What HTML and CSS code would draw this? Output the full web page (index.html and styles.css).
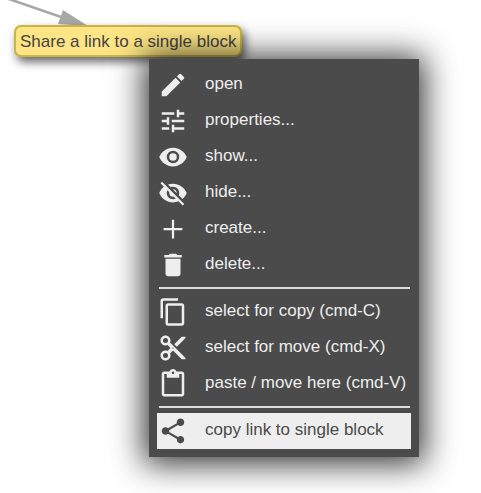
FILE: index.html
```
<!DOCTYPE html>
<html lang="en">
<head>
  <meta charset="UTF-8">
  <title>Concept map</title>
  <link rel="stylesheet" href="styles.css">
</head>
<body>
  <main class="map">
    <!-- incoming link -->
    <svg class="edge" width="100" height="30" viewBox="0 0 100 30" aria-hidden="true">
      <path d="M6 -2 L64 18" stroke="#a8a8a8" stroke-width="2.6" fill="none"/>
      <path d="M63 10 L88 26 L58 24 Z" fill="#a8a8a8"/>
    </svg>

    <div class="node">Share a link to a single block</div>

    <div class="menu" role="menu">
      <button class="item" role="menuitem">
        <svg class="icon" viewBox="0 0 24 24"><path d="M3 17.25V21h3.75L17.81 9.94l-3.75-3.75L3 17.25zM20.71 7.04a1 1 0 0 0 0-1.41l-2.34-2.34a1 1 0 0 0-1.41 0l-1.83 1.83 3.75 3.75 1.83-1.83z"/></svg>
        <span>open</span>
      </button>
      <button class="item" role="menuitem">
        <svg class="icon" viewBox="0 0 24 24"><path d="M3 17v2h6v-2H3zM3 5v2h10V5H3zm10 16v-2h8v-2h-8v-2h-2v6h2zM7 9v2H3v2h4v2h2V9H7zm14 4v-2H11v2h10zm-6-4h2V7h4V5h-4V3h-2v6z"/></svg>
        <span>properties...</span>
      </button>
      <button class="item" role="menuitem">
        <svg class="icon" viewBox="0 0 24 24"><path d="M12 4.5C7 4.5 2.73 7.61 1 12c1.73 4.39 6 7.5 11 7.5s9.27-3.11 11-7.5c-1.73-4.39-6-7.5-11-7.5zM12 17a5 5 0 1 1 0-10 5 5 0 0 1 0 10zm0-8a3 3 0 1 0 0 6 3 3 0 0 0 0-6z"/></svg>
        <span>show...</span>
      </button>
      <button class="item" role="menuitem">
        <svg class="icon" viewBox="0 0 24 24"><path d="M12 7c2.76 0 5 2.24 5 5 0 .65-.13 1.26-.36 1.83l2.92 2.92c1.51-1.26 2.7-2.89 3.43-4.75-1.73-4.39-6-7.5-11-7.5-1.4 0-2.74.25-3.98.7l2.16 2.16C10.74 7.13 11.35 7 12 7zM2 4.27l2.28 2.28.46.46C3.08 8.3 1.78 10.02 1 12c1.73 4.39 6 7.5 11 7.5 1.55 0 3.03-.3 4.38-.84l.42.42L19.73 22 21 20.73 3.27 3 2 4.27zM7.53 9.8l1.55 1.55c-.05.21-.08.43-.08.65 0 1.66 1.34 3 3 3 .22 0 .44-.03.65-.08l1.55 1.55c-.67.33-1.41.53-2.2.53-2.76 0-5-2.24-5-5 0-.79.2-1.53.53-2.2zm4.31-.78l3.15 3.15.02-.16c0-1.66-1.34-3-3-3l-.17.01z"/></svg>
        <span>hide...</span>
      </button>
      <button class="item" role="menuitem">
        <svg class="icon" viewBox="0 0 24 24"><path d="M19.5 12.9h-6.6v6.6h-1.8v-6.6H4.5v-1.8h6.6V4.5h1.8v6.6h6.6v1.8z"/></svg>
        <span>create...</span>
      </button>
      <button class="item" role="menuitem">
        <svg class="icon" viewBox="0 0 24 24"><path d="M6 19c0 1.1.9 2 2 2h8c1.1 0 2-.9 2-2V7H6v12zM19 4h-3.500l-1-1h-5l-1 1H5v2h14V4z"/></svg>
        <span>delete...</span>
      </button>
      <hr class="line">
      <button class="item" role="menuitem">
        <svg class="icon" viewBox="0 0 24 24"><path d="M16 1H4c-1.1 0-2 .9-2 2v14h2V3h12V1zm3 4H8c-1.1 0-2 .9-2 2v14c0 1.1.9 2 2 2h11c1.1 0 2-.9 2-2V7c0-1.1-.9-2-2-2zm0 16H8V7h11v14z"/></svg>
        <span>select for copy (cmd-C)</span>
      </button>
      <button class="item" role="menuitem">
        <svg class="icon" viewBox="0 0 24 24"><path d="M9.64 7.64c.23-.5.36-1.05.36-1.64 0-2.21-1.79-4-4-4S2 3.79 2 6s1.79 4 4 4c.59 0 1.14-.13 1.64-.36L10 12l-2.36 2.36C7.14 14.13 6.59 14 6 14c-2.21 0-4 1.79-4 4s1.79 4 4 4 4-1.79 4-4c0-.59-.13-1.14-.36-1.64L12 14l7 7h3v-1L9.64 7.64zM6 8a2 2 0 1 1 0-4 2 2 0 0 1 0 4zm0 12a2 2 0 1 1 0-4 2 2 0 0 1 0 4zm6-7.5a.5.5 0 1 1 0-1 .5.5 0 0 1 0 1zM19 3l-6 6 2 2 7-7V3z"/></svg>
        <span>select for move (cmd-X)</span>
      </button>
      <button class="item" role="menuitem">
        <svg class="icon" viewBox="0 0 24 24"><path d="M19 2h-4.18C14.4.84 13.3 0 12 0S9.6.84 9.18 2H5c-1.1 0-2 .9-2 2v16c0 1.1.9 2 2 2h14c1.1 0 2-.9 2-2V4c0-1.1-.9-2-2-2zm-7 0a1 1 0 1 1 0 2 1 1 0 0 1 0-2zm7 18H5V4h2v3h10V4h2v16z"/></svg>
        <span>paste / move here (cmd-V)</span>
      </button>
      <hr class="line">
      <button class="item active" role="menuitem">
        <svg class="icon" viewBox="0 0 24 24"><path d="M18 16.08c-.76 0-1.44.3-1.96.77L8.91 12.7c.05-.23.09-.46.09-.7s-.04-.47-.09-.7l7.05-4.11c.54.5 1.25.81 2.04.81 1.66 0 3-1.34 3-3s-1.34-3-3-3-3 1.34-3 3c0 .24.04.47.09.7L8.04 9.81C7.5 9.31 6.79 9 6 9c-1.66 0-3 1.34-3 3s1.34 3 3 3c.79 0 1.5-.31 2.04-.81l7.12 4.16c-.05.21-.08.43-.08.65 0 1.61 1.31 2.92 2.92 2.92s2.92-1.31 2.92-2.92-1.31-2.92-2.92-2.92z"/></svg>
        <span>copy link to single block</span>
      </button>
    </div>
  </main>
</body>
</html>
```
FILE: styles.css
```
body {
  margin: 0;
  background: #fff;
  font-family: "Liberation Sans", Arial, sans-serif;
  font-size: 17px;
}

.map {
  position: relative;
  min-height: 100vh;
  overflow: hidden;
}

.edge {
  position: absolute;
  top: 0;
  left: 0;
}

/* nodes and the menu sit freely on the map */
.node {
  position: absolute;
  top: 25px;
  left: 14px;
  padding: 5px 4px 3px;
  border: 2px solid #cab443;
  border-radius: 7px;
  background: #fde585;
  color: #444;
  line-height: 20px;
  white-space: nowrap;
  box-shadow: 3px 5px 10px rgba(0, 0, 0, 0.6);
}

.menu {
  position: absolute;
  top: 59px;
  left: 149px;
  padding: 8px;
  background: #4b4b4b;
  box-shadow: 0 2px 30px 5px rgba(0, 0, 0, 0.8);
}

.item {
  display: flex;
  align-items: center;
  gap: 17px;
  width: 100%;
  height: 36px;
  padding: 0 5px 0 1px;
  border: 0;
  background: none;
  color: #eee;
  font: inherit;
  text-align: left;
  white-space: nowrap;
  cursor: pointer;
}

.item span {
  padding-bottom: 3px;
}

.item.active {
  background: #eee;
  color: #4b4b4b;
}

.icon {
  flex: none;
  width: 30px;
  height: 30px;
  fill: currentColor;
}

.line {
  height: 2px;
  margin: 4px 1px 5px 2px;
  border: 0;
  background: #ddd;
}
```
